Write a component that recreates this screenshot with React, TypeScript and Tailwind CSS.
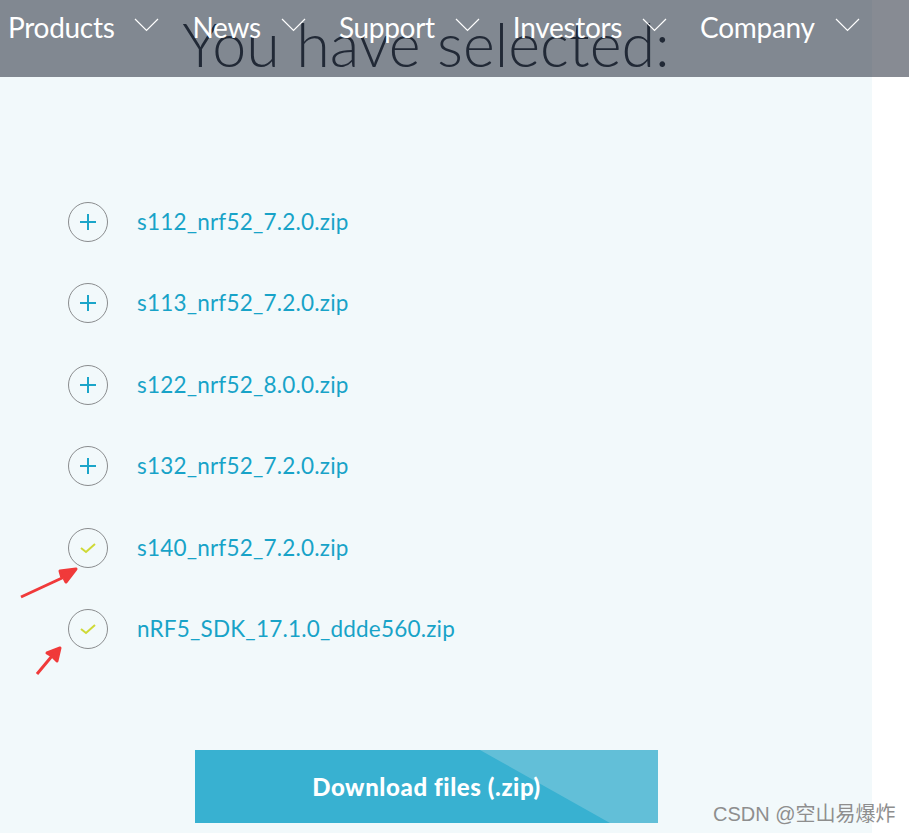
import React from "react";

const navItems = ["Products", "News", "Support", "Investors", "Company"];

const files = [
  { name: "s112_nrf52_7.2.0.zip", selected: false },
  { name: "s113_nrf52_7.2.0.zip", selected: false },
  { name: "s122_nrf52_8.0.0.zip", selected: false },
  { name: "s132_nrf52_7.2.0.zip", selected: false },
  { name: "s140_nrf52_7.2.0.zip", selected: true },
  { name: "nRF5_SDK_17.1.0_ddde560.zip", selected: true },
];

const Chevron = () => (
  <svg width="25" height="15" viewBox="0 0 25 15" fill="none" stroke="white" strokeWidth="1.2">
    <path d="M1 2 L12.5 13.5 L24 2" />
  </svg>
);

const FileRow = ({ name, selected }: { name: string; selected: boolean }) => (
  <div className="flex items-center h-[81.5px] pl-[68px]">
    <div className="w-10 h-10 rounded-full border border-[#8a8c8e] flex items-center justify-center shrink-0">
      {selected ? (
        <svg width="18" height="14" viewBox="0 0 18 14" fill="none" stroke="#cfd936" strokeWidth="2">
          <path d="M2 7 L7 11 L16 3" />
        </svg>
      ) : (
        <svg width="20" height="20" viewBox="0 0 20 20" fill="none" stroke="#1ba5c9" strokeWidth="2">
          <path d="M10 2 V18 M2 10 H18" />
        </svg>
      )}
    </div>
    <span className="ml-[29px] text-[22.5px] tracking-[0.2px] text-[#18a3c8]">{name}</span>
  </div>
);

export default function App() {
  return (
    <div className="relative w-[909px] h-[833px] bg-white overflow-hidden font-['Lato','Noto_Sans',sans-serif]">
      <div className="w-[872px] h-full bg-[#f2f9fb] flex flex-col">
        <h1 className="mt-[13px] pr-[20px] text-center text-[61px] leading-none font-light text-[#333a44]">
          You have selected:
        </h1>
        <div className="mt-[107px] flex flex-col">
          {files.map((f) => (
            <FileRow key={f.name} name={f.name} selected={f.selected} />
          ))}
        </div>
        <div className="mt-[80px] ml-[195px] w-[463px] h-[73px] relative bg-[#38b1d1] flex items-center justify-center overflow-hidden">
          <svg className="absolute inset-0" width="463" height="73" viewBox="0 0 463 73">
            <polygon points="285,0 463,0 463,73 415,73" fill="#62bfd8" />
          </svg>
          <span className="relative text-white text-[24px] font-black tracking-[0.6px]">Download files (.zip)</span>
        </div>
      </div>

      <div className="absolute top-0 left-0 w-full h-[77px] bg-gray-900/50 flex items-start pt-[8px] pl-[8px]">
        {navItems.map((item) => (
          <div key={item} className="flex items-center mr-[33px]">
            <span className="text-white text-[28px] leading-[38px] tracking-[-0.3px]">{item}</span>
            <span className="ml-[20px] mb-[6px]">
              <Chevron />
            </span>
          </div>
        ))}
      </div>

      <svg className="absolute left-0 top-0 pointer-events-none" width="909" height="833">
        <path d="M21 597 L62 578 L60 571 L76 569 L66 582 L64 578" fill="#f03a3a" stroke="#f03a3a" strokeWidth="3" strokeLinejoin="round" />
        <path d="M37 674 L52 656 L47 653 L60 648 L57 661 L52 656" fill="#f03a3a" stroke="#f03a3a" strokeWidth="3" strokeLinejoin="round" />
      </svg>

      <div className="absolute left-[713px] top-[799px] text-[20px] text-[#8e8e8e] font-['Liberation_Sans','Noto_Sans_CJK_SC',sans-serif]">
        CSDN @空山易爆炸
      </div>
    </div>
  );
}
